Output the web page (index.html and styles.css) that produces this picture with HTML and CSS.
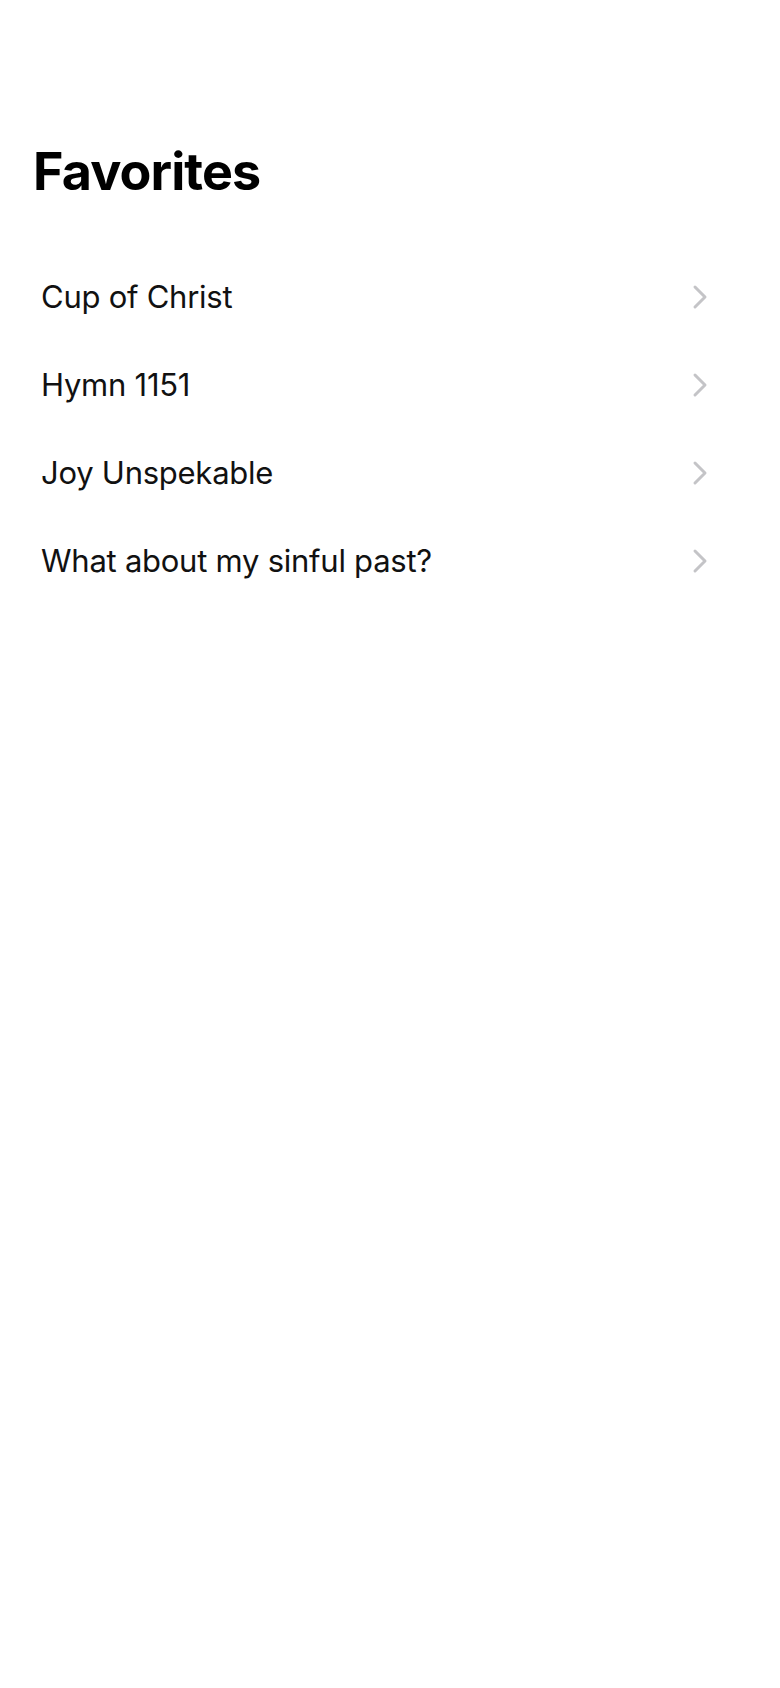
FILE: index.html
```html
<!DOCTYPE html>
<html>
<head>
<meta charset="utf-8">
<link rel="stylesheet" href="styles.css">
</head>
<body>
<div class="screen">
  <h1 class="title">Favorites</h1>
  <ul class="list">
    <li class="row"><span class="label">Cup of Christ</span><svg class="chev" width="16" height="26" viewBox="0 0 16 26"><polyline points="3,3 13,13 3,23" fill="none" stroke="#c4c4c7" stroke-width="3" stroke-linecap="round" stroke-linejoin="round"/></svg></li>
    <li class="row"><span class="label">Hymn 1151</span><svg class="chev" width="16" height="26" viewBox="0 0 16 26"><polyline points="3,3 13,13 3,23" fill="none" stroke="#c4c4c7" stroke-width="3" stroke-linecap="round" stroke-linejoin="round"/></svg></li>
    <li class="row"><span class="label">Joy Unspekable</span><svg class="chev" width="16" height="26" viewBox="0 0 16 26"><polyline points="3,3 13,13 3,23" fill="none" stroke="#c4c4c7" stroke-width="3" stroke-linecap="round" stroke-linejoin="round"/></svg></li>
    <li class="row"><span class="label">What about my sinful past?</span><svg class="chev" width="16" height="26" viewBox="0 0 16 26"><polyline points="3,3 13,13 3,23" fill="none" stroke="#c4c4c7" stroke-width="3" stroke-linecap="round" stroke-linejoin="round"/></svg></li>
  </ul>
</div>
</body>
</html>
```
FILE: styles.css
```css
html, body {
  margin: 0;
  padding: 0;
  background: #ffffff;
}
body {
  font-family: Inter, "Liberation Sans", sans-serif;
  color: #000;
}
.screen {
  width: 780px;
  min-height: 1688px;
  padding-top: 140px;
  box-sizing: border-box;
}
.title {
  margin: 0;
  padding-left: 33px;
  font-size: 52px;
  line-height: 64px;
  font-weight: 700;
  letter-spacing: -0.9px;
}
.list {
  list-style: none;
  margin: 49px 0 0;
  padding: 0 0 0 41px;
}
.row {
  height: 88px;
  display: flex;
  align-items: center;
  justify-content: space-between;
  padding-right: 72px;
}
.label {
  font-size: 31px;
  line-height: 40px;
  font-weight: 400;
  color: #111;
  letter-spacing: -0.25px;
}
.chev {
  display: block;
}
```
